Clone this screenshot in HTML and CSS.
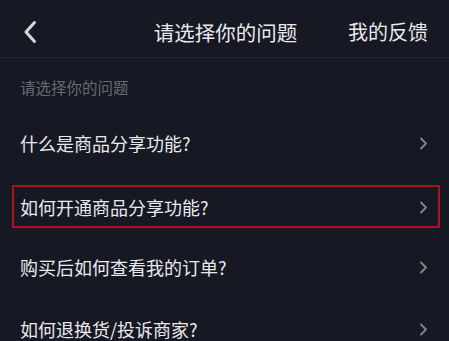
FILE: index.html
```html
<!DOCTYPE html>
<html lang="zh-CN">
<head>
<meta charset="utf-8">
<link rel="stylesheet" href="styles.css">
</head>
<body>
<div class="page">
  <header class="header">
    <span class="back">
      <svg width="14" height="24" viewBox="0 0 14 24"><path d="M11.5 2.5 L3 12 L11.5 21.5" fill="none" stroke="#d6d6da" stroke-width="3" stroke-linecap="round" stroke-linejoin="round"/></svg>
    </span>
    <h1 class="title">请选择你的问题</h1>
    <span class="feedback">我的反馈</span>
  </header>
  <div class="subtitle">请选择你的问题</div>
  <ul class="list">
    <li class="row"><span>什么是商品分享功能?</span><svg class="chev" width="9" height="13" viewBox="0 0 9 13"><path d="M2 1.5 L7 6.5 L2 11.5" fill="none" stroke="#85868d" stroke-width="1.8" stroke-linecap="round" stroke-linejoin="round"/></svg></li>
    <li class="row marked"><span>如何开通商品分享功能?</span><svg class="chev" width="9" height="13" viewBox="0 0 9 13"><path d="M2 1.5 L7 6.5 L2 11.5" fill="none" stroke="#85868d" stroke-width="1.8" stroke-linecap="round" stroke-linejoin="round"/></svg></li>
    <li class="row"><span>购买后如何查看我的订单?</span><svg class="chev" width="9" height="13" viewBox="0 0 9 13"><path d="M2 1.5 L7 6.5 L2 11.5" fill="none" stroke="#85868d" stroke-width="1.8" stroke-linecap="round" stroke-linejoin="round"/></svg></li>
    <li class="row"><span>如何退换货/投诉商家?</span><svg class="chev" width="9" height="13" viewBox="0 0 9 13"><path d="M2 1.5 L7 6.5 L2 11.5" fill="none" stroke="#85868d" stroke-width="1.8" stroke-linecap="round" stroke-linejoin="round"/></svg></li>
  </ul>
</div>
</body>
</html>
```
FILE: styles.css
```css
html, body {
  margin: 0;
  padding: 0;
  background: #161823;
}
body {
  font-family: "Noto Sans CJK SC", "Noto Sans", sans-serif;
  color: #e9e9ec;
  overflow: hidden;
}
.page {
  width: 449px;
  height: 341px;
  overflow: hidden;
}
.header {
  height: 57px;
  border-bottom: 1px solid #23252f;
  display: grid;
  grid-template-columns: 1fr auto 1fr;
  align-items: center;
  padding: 0 21px 0 23px;
}
.back {
  display: flex;
  align-items: center;
  margin-top: 6px;
}
.title {
  margin: 0;
  text-align: center;
  font-size: 20.5px;
  font-weight: 400;
  line-height: 24px;
  margin-top: 6px;
}
.feedback {
  justify-self: end;
  font-size: 20px;
  line-height: 24px;
  margin-top: 6px;
}
.subtitle {
  font-size: 15.5px;
  line-height: 22px;
  color: #686a72;
  padding: 18px 20px 14px;
}
.list {
  list-style: none;
  margin: 0;
  padding: 0;
}
.row {
  height: 62px;
  display: flex;
  align-items: center;
  justify-content: space-between;
  padding: 0 21px 0 20px;
  font-size: 18px;
  position: relative;
}
.row span {
  line-height: 24px;
}
.chev {
  display: block;
}
.marked span, .marked .chev {
  margin-top: 4px;
}
.marked::after {
  content: "";
  position: absolute;
  top: 11px;
  bottom: 8px;
  left: 12px;
  right: 9px;
  border: 2px solid #a8141d;
}
```
